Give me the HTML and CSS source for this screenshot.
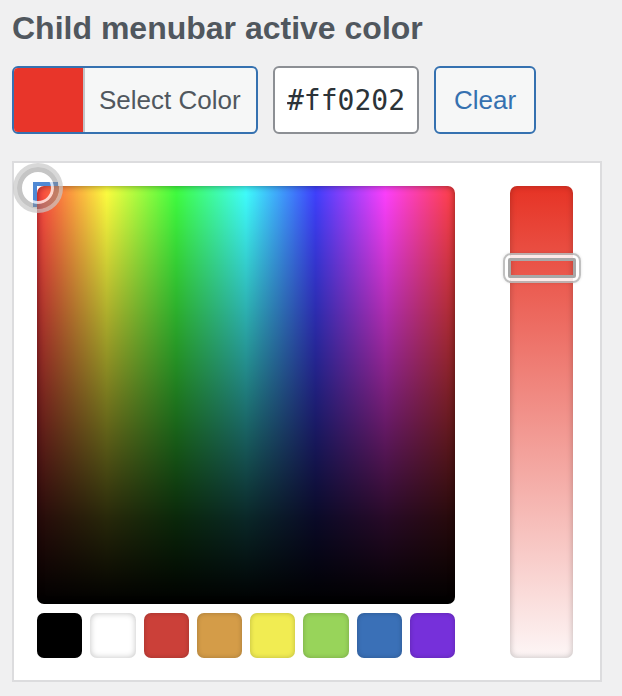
FILE: index.html
```html
<!DOCTYPE html>
<html lang="en">
<head>
<meta charset="utf-8">
<title>Child menubar active color</title>
<link rel="stylesheet" href="styles.css">
</head>
<body>
<div class="field">
  <h2 class="label">Child menubar active color</h2>
  <div class="controls">
    <button class="color-btn" type="button"><span class="current"></span><span class="btn-text">Select Color</span></button>
    <input class="hex" type="text" value="#ff0202">
    <button class="clear" type="button">Clear</button>
  </div>
  <div class="picker">
    <div class="left">
      <div class="square-wrap">
        <div class="focus-box"></div>
        <div class="square"></div>
        <div class="sq-handle"></div>
      </div>
      <div class="palette">
        <span class="sw sw-black"></span>
        <span class="sw sw-white"></span>
        <span class="sw sw-red"></span>
        <span class="sw sw-orange"></span>
        <span class="sw sw-yellow"></span>
        <span class="sw sw-green"></span>
        <span class="sw sw-blue"></span>
        <span class="sw sw-purple"></span>
      </div>
    </div>
    <div class="strip-wrap">
      <div class="strip"></div>
      <div class="strip-handle"><span class="strip-handle-inner"></span></div>
    </div>
  </div>
</div>
</body>
</html>
```

FILE: styles.css
```css
html, body {
  margin: 0;
  background: #f0f0f1;
}
body {
  padding: 10px 12px 0;
  font-family: "Liberation Sans", Arial, sans-serif;
}
.label {
  margin: 0 0 20px;
  font: 700 32px/36px "Liberation Sans", Arial, sans-serif;
  color: #50575e;
}
.controls {
  display: flex;
  gap: 15px;
  height: 68px;
}
.color-btn {
  display: flex;
  padding: 0;
  width: 246px;
  height: 68px;
  border: 2px solid #3571b0;
  border-radius: 6px;
  overflow: hidden;
  background: #f6f7f7;
  cursor: pointer;
}
.current {
  width: 69px;
  flex: none;
  background: #e8352a;
  border-right: 2px solid #c3c4c7;
}
.btn-text {
  flex: 1;
  display: flex;
  align-items: center;
  padding: 0 14px;
  font: 26px "Liberation Sans", Arial, sans-serif;
  color: #50575e;
}
.hex {
  box-sizing: border-box;
  width: 146px;
  height: 68px;
  margin: 0;
  padding: 0 12px;
  border: 2px solid #8c8f94;
  border-radius: 6px;
  background: #fff;
  font: 28px "DejaVu Sans Mono", monospace;
  color: #2c3338;
}
.clear {
  box-sizing: border-box;
  width: 102px;
  height: 68px;
  padding: 0;
  border: 2px solid #3571b0;
  border-radius: 6px;
  background: #f6f7f7;
  color: #3571b0;
  font: 26px "Liberation Sans", Arial, sans-serif;
}
.picker {
  box-sizing: border-box;
  width: 590px;
  margin-top: 27px;
  display: flex;
  gap: 55px;
  padding: 23px 27px 22px 23px;
  border: 2px solid #dcdcde;
  background: #fff;
}
.left {
  width: 418px;
  flex: none;
}
.square-wrap {
  position: relative;
  width: 418px;
  height: 418px;
}
.focus-box {
  position: absolute;
  left: -4px;
  top: -4px;
  width: 25px;
  height: 25px;
  box-sizing: border-box;
  border: 4px solid #5089d4;
}
.square {
  position: relative;
  width: 100%;
  height: 100%;
  border-radius: 7px;
  background:
    linear-gradient(to bottom, rgba(0,0,0,0) 0%, rgba(0,0,0,.47) 45%, rgba(0,0,0,.85) 80%, #000 100%),
    linear-gradient(rgba(255,255,255,.25), rgba(255,255,255,.25)),
    linear-gradient(to right, #f00 0%, #ff0 16.66%, #0f0 33.33%, #0ff 50%, #00f 66.66%, #f0f 83.33%, #f00 100%);
  box-shadow: inset 0 0 7px rgba(0,0,0,.45);
}
.sq-handle {
  position: absolute;
  left: -24px;
  top: -23px;
  width: 50px;
  height: 50px;
  box-sizing: border-box;
  border-radius: 50%;
  border: 4px solid rgba(200,200,200,.7);
  filter: blur(.5px);
}
.sq-handle::after {
  content: "";
  position: absolute;
  inset: 0;
  border-radius: 50%;
  border: 5px solid rgba(140,140,140,.5);
  box-shadow: inset 0 0 0 3px rgba(255,255,255,.75);
}
.palette {
  margin-top: 9px;
  display: grid;
  grid-template-columns: repeat(8, 1fr);
  gap: 8px;
}
.sw {
  height: 45px;
  border-radius: 7px;
  box-shadow: inset 0 0 5px rgba(0,0,0,.22);
}
.sw-black { background: #000; }
.sw-white { background: #fff; box-shadow: inset 0 0 6px rgba(0,0,0,.25); }
.sw-red { background: #cb4039; }
.sw-orange { background: #d49c48; }
.sw-yellow { background: #f1ec52; }
.sw-green { background: #98d45a; }
.sw-blue { background: #3a70b7; }
.sw-purple { background: #7630da; }
.strip-wrap {
  position: relative;
  width: 63px;
  flex: none;
}
.strip {
  height: 472px;
  border-radius: 7px;
  background: linear-gradient(to bottom, #e63325 0%, #fdf6f6 100%);
  box-shadow: inset 0 0 6px rgba(0,0,0,.25);
}
.strip-handle {
  position: absolute;
  left: -7px;
  top: 67px;
  width: 78px;
  height: 30px;
  box-sizing: border-box;
  border: 2px solid rgba(185,185,185,.9);
  border-radius: 8px;
  box-shadow: inset 0 0 0 3px rgba(255,255,255,.88), 0 0 3px rgba(0,0,0,.12);
}
.strip-handle-inner {
  position: absolute;
  inset: 3px;
  border: 3px solid #a8a8a8;
  border-radius: 2px;
}
```
